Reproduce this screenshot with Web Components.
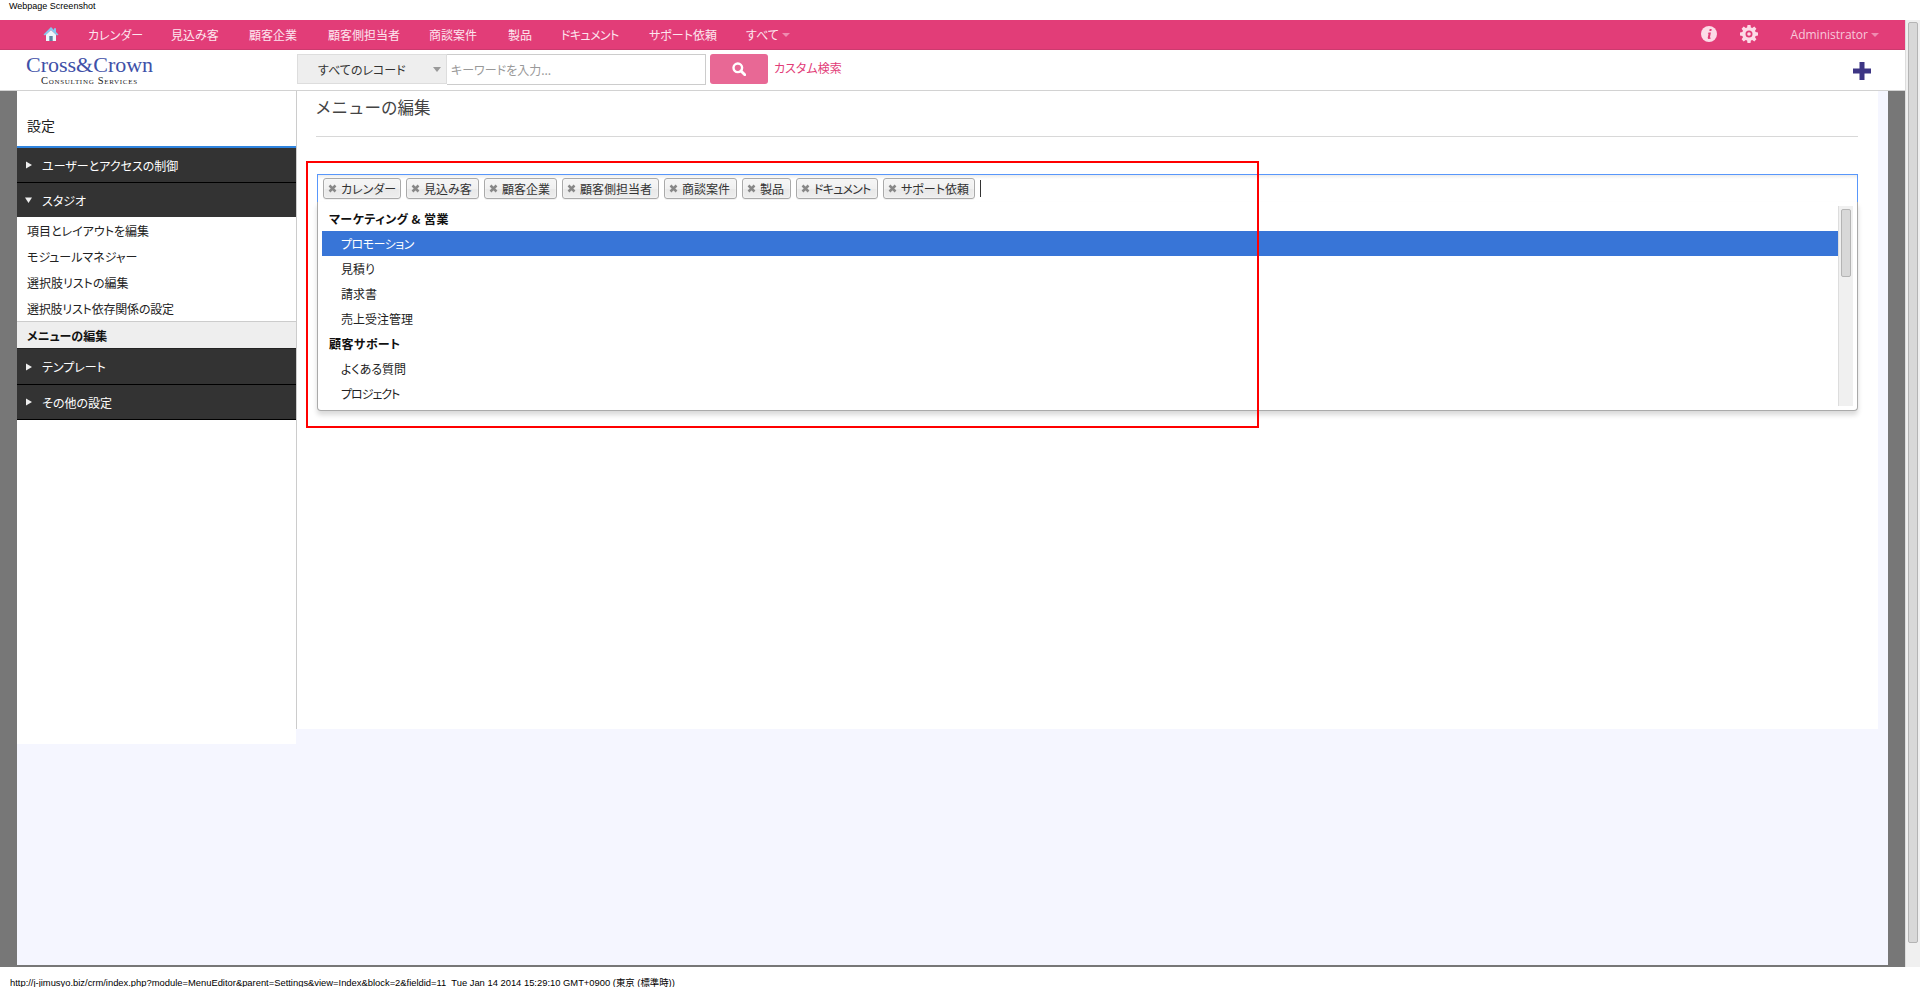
<!DOCTYPE html>
<html lang="ja">
<head>
<meta charset="utf-8">
<title>メニューの編集</title>
<style>
  html, body { margin: 0; height: 987px; overflow: hidden; background: #fff; }
  body { font: 12px "Noto Sans CJK JP", "Liberation Sans", sans-serif; color: #222; display: flex; flex-direction: column; }
</style>
</head>
<body>
<shot-caption>Webpage Screenshot</shot-caption>
<crm-window>
  <crm-topnav>
    <nav-link w="83">カレンダー</nav-link>
    <nav-link w="78">見込み客</nav-link>
    <nav-link w="79">顧客企業</nav-link>
    <nav-link w="101">顧客側担当者</nav-link>
    <nav-link w="79">商談案件</nav-link>
    <nav-link w="53">製品</nav-link>
    <nav-link w="88" style="letter-spacing:-.6px">ドキュメント</nav-link>
    <nav-link w="97">サポート依頼</nav-link>
    <nav-link w="46" caret>すべて</nav-link>
  </crm-topnav>
  <crm-searchbar></crm-searchbar>
  <crm-body>
    <crm-sidebar>
      <side-group>ユーザーとアクセスの制御</side-group>
      <side-group open>スタジオ</side-group>
      <side-link>項目とレイアウトを編集</side-link>
      <side-link>モジュールマネジャー</side-link>
      <side-link>選択肢リストの編集</side-link>
      <side-link style="letter-spacing:-.2px">選択肢リスト依存関係の設定</side-link>
      <side-link active>メニューの編集</side-link>
      <side-group tall>テンプレート</side-group>
      <side-group>その他の設定</side-group>
    </crm-sidebar>
    <menu-editor>
      <tag-pill w="78">カレンダー</tag-pill>
      <tag-pill w="73">見込み客</tag-pill>
      <tag-pill w="73">顧客企業</tag-pill>
      <tag-pill w="97">顧客側担当者</tag-pill>
      <tag-pill w="73">商談案件</tag-pill>
      <tag-pill w="49">製品</tag-pill>
      <tag-pill w="82" style="letter-spacing:-.8px">ドキュメント</tag-pill>
      <tag-pill w="92">サポート依頼</tag-pill>
      <menu-row slot="rows" head>マーケティング &amp; 営業</menu-row>
      <menu-row slot="rows" active style="letter-spacing:-.5px">プロモーション</menu-row>
      <menu-row slot="rows">見積り</menu-row>
      <menu-row slot="rows">請求書</menu-row>
      <menu-row slot="rows">売上受注管理</menu-row>
      <menu-row slot="rows" head>顧客サポート</menu-row>
      <menu-row slot="rows">よくある質問</menu-row>
      <menu-row slot="rows" style="letter-spacing:-1px">プロジェクト</menu-row>
    </menu-editor>
  </crm-body>
</crm-window>
<shot-footer>http://j-jimusyo.biz/crm/index.php?module=MenuEditor&amp;parent=Settings&amp;view=Index&amp;block=2&amp;fieldid=11&nbsp; Tue Jan 14 2014 15:29:10 GMT+0900 (東京 (標準時))</shot-footer>

<script>
// small helper so each element just declares its css + markup
function comp(tag, css, html, init) {
  customElements.define(tag, class extends HTMLElement {
    constructor() {
      super();
      this.attachShadow({ mode: 'open' });
      this.shadowRoot.innerHTML = `<style>${css}</style>${typeof html === 'function' ? html(this) : html}`;
      if (init) init(this);
    }
  });
}

comp('shot-caption', `
  :host { display: block; height: 20px; padding: 0 0 0 9px; font: 9px/13px "Liberation Sans", sans-serif; color: #000; box-sizing: border-box; }
`, `<slot></slot>`);

comp('shot-footer', `
  :host { display: block; height: 20px; padding: 9px 0 0 10px; box-sizing: border-box; font: 9.4px/13px "Liberation Sans", "Noto Sans CJK JP", sans-serif; color: #000; white-space: nowrap; }
`, `<slot></slot>`);

comp('crm-window', `
  :host { display: grid; grid-template-columns: 1905px 15px; height: 947px; }
  .page { display: flex; flex-direction: column; min-width: 0; }
  .bar { background: #f0f0f0; border-left: 1px solid #ddd; padding: 2px 2px 24px 2px; box-sizing: border-box; display: flex; }
  .thumb { flex: 1; background: #d8d8d8; border: 1px solid #b4b4b4; border-radius: 2px; }
`, `<div class="page"><slot></slot></div><div class="bar"><div class="thumb"></div></div>`);

comp('crm-topnav', `
  :host { display: flex; align-items: center; height: 30px; box-sizing: border-box; background: #e23d78; border-bottom: 1px solid #cc3a6e; padding: 0 26px 1px 43px; }
  .home { width: 45px; display: flex; }
  .right { margin-left: auto; display: flex; align-items: center; color: #f8c9db; }
  .info { margin-right: 23px; display: flex; }
  .gear { margin-right: 33px; display: flex; }
  .admin { font: 12px "Open Sans", "Liberation Sans", sans-serif; }
  .caret { width: 0; height: 0; border: 4px solid transparent; border-top-color: #ee8cb0; border-bottom: 0; margin-left: 3px; margin-top: 2px; }
`, `
  <div class="home"><svg width="16" height="16" viewBox="0 0 16 16">
    <path d="M3 8.500 8 4l5 4.500V15H3z" fill="#eef6fb"/>
    <path d="M6.300 10h3.400v5H6.300z" fill="#5f84a3"/>
    <path d="M8 1 .5 8.400 2 9.600 8 4l6 5.600 1.500-1.200L13 6V2.200h-2v1.900z" fill="#84c8ee"/>
  </svg></div>
  <slot></slot>
  <div class="right">
    <div class="info"><svg width="16" height="16" viewBox="0 0 16 16"><circle cx="8" cy="8" r="8" fill="#fcdbe7"/><path d="M8.700 3h2l-.4 2h-2zM7.600 6.500h2.300L8.900 11.500c0 .4.400.4 1 .1l-.2.900c-1.300.6-3 .7-3-.8L7.500 8c0-.5-.3-.6-.8-.6z" fill="#e23d78"/></svg></div>
    <div class="gear"><svg width="18" height="18" viewBox="0 0 18 18"><path fill="#fcdbe7" fill-rule="evenodd" d="M7.500 0h3l.4 2.400 1.400.6 2-1.400 2.100 2.100-1.400 2 .6 1.400 2.400.4v3l-2.400.4-.6 1.400 1.400 2-2.100 2.100-2-1.400-1.400.6-.4 2.400h-3l-.4-2.400-1.400-.6-2 1.400-2.100-2.100 1.400-2-.6-1.400L0 10.500v-3l2.400-.4.6-1.400-1.400-2 2.100-2.100 2 1.400 1.400-.6zM9 5.500a3.500 3.500 0 1 0 0 7 3.500 3.500 0 0 0 0-7z"/><circle cx="9" cy="9" r="1.800" fill="#fcdbe7"/></svg></div>
    <span class="admin">Administrator</span><span class="caret"></span>
  </div>
`);

comp('nav-link', `
  :host { display: flex; align-items: center; width: var(--w); flex: none; color: #fde6ef; font-feature-settings: "palt"; white-space: nowrap; }
  i { width: 0; height: 0; border: 4px solid transparent; border-top-color: #ee8cb0; border-bottom: 0; margin: 2px 0 0 3px; }
`, el => `<slot></slot>${el.hasAttribute('caret') ? '<i></i>' : ''}`, el => el.style.setProperty('--w', el.getAttribute('w') + 'px'));

comp('crm-searchbar', `
  :host { display: flex; height: 41px; box-sizing: border-box; border-bottom: 1px solid #d2d2d2; background: #fff; padding: 4px 34px 0 0; font-feature-settings: "palt"; }
  .logo { width: 297px; padding: 1px 0 0 26px; box-sizing: border-box; color: #3f51a8; }
  .name { font: 22px/19px "Liberation Serif", serif; white-space: nowrap; }
  .sub { font: 10.500px/9px "Liberation Serif", serif; color: #222; margin: 2px 0 0 15px; font-variant: small-caps; letter-spacing: .7px; white-space: nowrap; }
  .scope { width: 150px; height: 30px; box-sizing: border-box; background: #eee; border: 1px solid #ddd; padding-left: 20px; display: flex; align-items: center; color: #333; }
  .scope i { margin-left: auto; margin-right: 5px; width: 0; height: 0; border: 4px solid transparent; border-top: 5px solid #999; border-bottom: 0; }
  .kw { width: 259px; height: 31px; box-sizing: border-box; border: 1px solid #ccc; border-left: 0; padding-left: 4px; display: flex; align-items: center; color: #999; }
  .go { width: 58px; height: 30px; margin-left: 4px; background: #e86895; border-radius: 3px; display: flex; align-items: center; justify-content: center; }
  .custom { margin-left: 6px; color: #e23d78; line-height: 28px; }
  .plus { margin-left: auto; margin-top: 8px; }
`, `
  <div class="logo"><div class="name">Cross&amp;Crown</div><div class="sub">Consulting Services</div></div>
  <div class="scope">すべてのレコード<i></i></div>
  <div class="kw">キーワードを入力...</div>
  <div class="go"><svg width="14" height="14" viewBox="0 0 14 14"><circle cx="5.800" cy="5.800" r="4.300" fill="none" stroke="#fff" stroke-width="2.400"/><path d="M9 9l3.800 3.800" stroke="#fff" stroke-width="2.800" stroke-linecap="round"/></svg></div>
  <div class="custom">カスタム検索</div>
  <svg class="plus" width="18" height="18" viewBox="0 0 18 18"><path d="M6.500 0h5v6.500H18v5h-6.500V18h-5v-6.500H0v-5h6.500z" fill="#3d3584"/></svg>
`);

comp('crm-body', `
  :host { flex: 1; display: flex; min-height: 0; align-items: flex-start; background: #f5f6ff; border: solid #777; border-width: 0 17px 2px; }
`, `<slot></slot>`);

comp('crm-sidebar', `
  :host { display: block; width: 279px; height: 653px; flex: none; background: #fff; font-feature-settings: "palt"; }
  h2 { margin: 0; height: 57px; box-sizing: border-box; padding: 23px 0 0 10px; font: 400 14px/22px "Noto Sans CJK JP", sans-serif; color: #222; border-bottom: 2px solid #2f84df; }
`, `<h2>設定</h2><slot></slot>`);

comp('side-group', `
  :host { display: flex; align-items: center; height: 35px; box-sizing: border-box; background: #333; border-bottom: 1px solid #000; color: #fff; padding-left: 8px; }
  :host([open]) { height: 34px; border-bottom: 0; }
  :host([tall]) { height: 36px; }
  i { width: 12px; margin-right: 5px; display: flex; }
`, el => `<i><svg width="8" height="8" viewBox="0 0 8 8"><path d="${el.hasAttribute('open') ? 'M0 1.500h7L3.500 7z' : 'M1 .5 7 4 1 7.500z'}" fill="#eee"/></svg></i><slot></slot>`);

comp('side-link', `
  :host { display: flex; align-items: center; height: 26px; padding-left: 10px; color: #222; }
  :host([active]) { height: 28px; box-sizing: border-box; background: #eee; border-top: 1px solid #ccc; border-bottom: 1px solid #222; font-weight: 700; color: #111; }
`, `<slot></slot>`);

comp('menu-editor', `
  :host { display: block; position: relative; width: 1582px; height: 638px; flex: none; box-sizing: border-box; border-left: 1px solid #ccc; background: #fff; padding: 0 20px 0 19px; font-feature-settings: "palt"; }
  h1 { margin: 0 0 37px; height: 46px; box-sizing: border-box; border-bottom: 1px solid #d8d8d8; font: 400 16.500px/32px "Noto Sans CJK JP", sans-serif; color: #444; text-indent: -1px; }
  .box { margin-left: 1px; }
  .tags { height: 28px; box-sizing: border-box; border: 1px solid #5897fb; border-bottom: 0; padding: 3px 5px; display: flex; gap: 5px; background: linear-gradient(#eee 1%, #fff 15%); }
  .cursor { width: 1px; height: 17px; margin: 2px 0 0 0; background: #333; }
  .drop { height: 209px; box-sizing: border-box; border: 1px solid #aaa; border-top: 0; border-radius: 0 0 4px 4px; box-shadow: 0 4px 5px rgba(0,0,0,.15); background: #fff; padding: 4px 4px 0; display: flex; }
  .rows { flex: 1; min-width: 0; }
  .sb { width: 15px; height: 200px; box-sizing: border-box; background: #f0f0f0; border-left: 1px solid #ddd; padding: 3px 2px; }
  .sb div { height: 68px; box-sizing: border-box; background: #d8d8d8; border: 1px solid #b4b4b4; border-radius: 2px; }
  .mark { position: absolute; left: 9px; top: 70px; width: 953px; height: 267px; box-sizing: border-box; border: 2px solid #f00; pointer-events: none; }
`, `
  <h1>メニューの編集</h1>
  <div class="box">
    <div class="tags"><slot></slot><div class="cursor"></div></div>
    <div class="drop"><div class="rows"><slot name="rows"></slot></div><div class="sb"><div></div></div></div>
  </div>
  <div class="mark"></div>
`);

comp('tag-pill', `
  :host { display: flex; align-items: center; width: var(--w); height: 21px; flex: none; box-sizing: border-box; border: 1px solid #aaa; border-radius: 3px; color: #333; white-space: nowrap; padding-left: 4px;
    background: linear-gradient(#f4f4f4 20%, #f0f0f0 50%, #e8e8e8 52%, #eee 100%); box-shadow: 0 0 2px #fff inset, 0 1px 0 rgba(0,0,0,.05); }
  svg { margin-right: 4px; flex: none; }
`, `<svg width="9" height="9" viewBox="0 0 9 9"><path d="M1.500 1.500 7.500 7.500M7.500 1.500 1.500 7.500" stroke="#888" stroke-width="2.500"/></svg><slot></slot>`,
  el => el.style.setProperty('--w', el.getAttribute('w') + 'px'));

comp('menu-row', `
  :host { display: flex; align-items: center; height: 25px; padding: 0 0 1px 19px; box-sizing: border-box; color: #222; }
  :host([head]) { padding-left: 7px; font-weight: 700; color: #111; letter-spacing: .45px; }
  :host([active]) { background: #3875d7; color: #fff; }
`, `<slot></slot>`);
</script>
</body>
</html>
